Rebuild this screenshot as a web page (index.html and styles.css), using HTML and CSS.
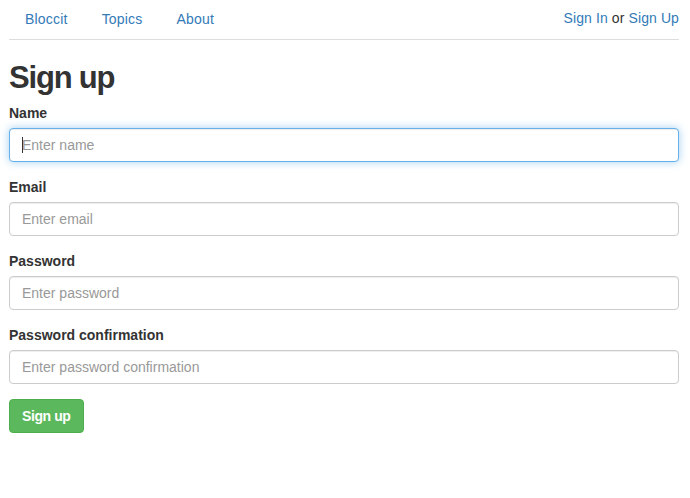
FILE: index.html
```html
<!DOCTYPE html>
<html>
<head>
<meta charset="utf-8">
<title>Bloccit</title>
<link rel="stylesheet" href="styles.css">
</head>
<body>
<div class="container">
  <nav class="topnav">
    <ul class="nav-pills">
      <li><a href="#">Bloccit</a></li>
      <li><a href="#">Topics</a></li>
      <li><a href="#">About</a></li>
    </ul>
    <div class="user-info"><a href="#">Sign In</a> or <a href="#">Sign Up</a></div>
  </nav>
  <h1 class="title">Sign up</h1>
  <form class="signup">
    <div class="form-group">
      <label class="label">Name</label>
      <div class="field-wrap">
        <input class="form-control is-focused" type="text" placeholder="Enter name">
        <span class="caret-line"></span>
      </div>
    </div>
    <div class="form-group">
      <label class="label">Email</label>
      <input class="form-control" type="text" placeholder="Enter email">
    </div>
    <div class="form-group">
      <label class="label">Password</label>
      <input class="form-control" type="text" placeholder="Enter password">
    </div>
    <div class="form-group">
      <label class="label">Password confirmation</label>
      <input class="form-control" type="text" placeholder="Enter password confirmation">
    </div>
    <button class="btn-success" type="button">Sign up</button>
  </form>
</div>
</body>
</html>
```
FILE: styles.css
```css
* { box-sizing: border-box; }
html, body { margin: 0; padding: 0; background: #fff; }
body {
  font-family: "Liberation Sans", Arial, sans-serif;
  font-size: 14px;
  line-height: 20px;
  color: #333;
}
a { color: #337ab7; text-decoration: none; }
.container { padding: 0 11px 0 9px; }
.topnav {
  display: flex;
  justify-content: space-between;
  align-items: flex-start;
  border-bottom: 1px solid #ddd;
  height: 40px;
}
.nav-pills { list-style: none; margin: 0; padding: 0; display: flex; }
.nav-pills li a { display: block; padding: 9px 17px 9px; letter-spacing: 0.2px; }
.nav-pills li:first-child a { padding-left: 16px; }
.user-info { padding-top: 8px; letter-spacing: 0.1px; }
.title {
  font-size: 31px;
  font-weight: bold;
  letter-spacing: -1.2px;
  line-height: 36px;
  margin: 20px 0 7px;
  color: #333;
}
.form-group { margin-bottom: 15px; }
.label { display: block; font-weight: bold; margin-bottom: 5px; }
.field-wrap { position: relative; }
.form-control {
  display: block;
  width: 100%;
  height: 34px;
  padding: 6px 12px;
  font-family: "Liberation Sans", Arial, sans-serif;
  font-size: 14px;
  color: #555;
  background: #fff;
  border: 1px solid #ccc;
  border-radius: 4px;
  box-shadow: inset 0 1px 1px rgba(0,0,0,.075);
  outline: none;
}
.form-control::placeholder { color: #999; }
.form-control.is-focused {
  border-color: #66afe9;
  box-shadow: inset 0 1px 1px rgba(0,0,0,.075), 0 0 8px rgba(102,175,233,.6);
}
.caret-line {
  position: absolute;
  left: 13px;
  top: 9px;
  width: 1px;
  height: 16px;
  background: #333;
}
.btn-success {
  display: inline-block;
  height: 34px;
  padding: 6px 12px;
  font-family: "Liberation Sans", Arial, sans-serif;
  font-size: 14px;
  font-weight: bold;
  letter-spacing: -0.4px;
  line-height: 20px;
  color: #fff;
  background: #5cb85c;
  border: 1px solid #4cae4c;
  border-radius: 4px;
  margin-top: 0;
}
```
